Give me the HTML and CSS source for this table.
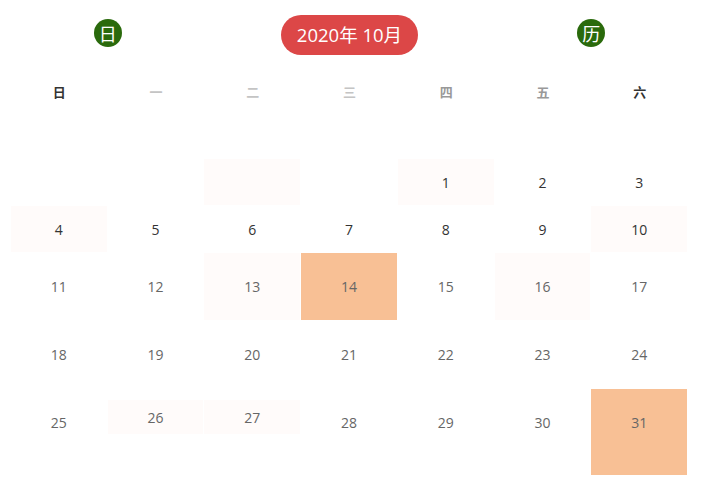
FILE: index.html
```html
<!DOCTYPE html>
<html lang="zh">
<head>
<meta charset="utf-8">
<title>日历</title>
<link rel="stylesheet" href="styles.css">
</head>
<body>
<div class="cal">
  <div class="top">
    <div class="badge-slot left"><span class="circle">日</span></div>
    <div class="title-slot"><span class="title">2020年 10月</span></div>
    <div class="badge-slot right"><span class="circle">历</span></div>
  </div>
  <div class="weekdays">
    <span class="wd dark">日</span>
    <span class="wd light">一</span>
    <span class="wd light">二</span>
    <span class="wd light">三</span>
    <span class="wd mid">四</span>
    <span class="wd mid">五</span>
    <span class="wd dark">六</span>
  </div>
  <div class="days">
    <div class="d"></div>
    <div class="d"></div>
    <div class="d soft"></div>
    <div class="d"></div>
    <div class="d soft dk">1</div>
    <div class="d dk">2</div>
    <div class="d dk">3</div>

    <div class="d soft dk">4</div>
    <div class="d dk">5</div>
    <div class="d dk">6</div>
    <div class="d dk">7</div>
    <div class="d dk">8</div>
    <div class="d dk">9</div>
    <div class="d soft dk">10</div>

    <div class="d">11</div>
    <div class="d">12</div>
    <div class="d soft">13</div>
    <div class="d hot">14</div>
    <div class="d">15</div>
    <div class="d soft">16</div>
    <div class="d">17</div>

    <div class="d">18</div>
    <div class="d">19</div>
    <div class="d">20</div>
    <div class="d">21</div>
    <div class="d">22</div>
    <div class="d">23</div>
    <div class="d">24</div>

    <div class="d last">25</div>
    <div class="d soft small">26</div>
    <div class="d soft small">27</div>
    <div class="d last">28</div>
    <div class="d last">29</div>
    <div class="d last">30</div>
    <div class="d hot last">31</div>
  </div>
</div>
</body>
</html>
```

FILE: styles.css
```css
* { box-sizing: border-box; }
body {
  margin: 0;
  background: #fff;
  font-family: "Open Sans", "Noto Sans CJK SC", sans-serif;
}
.cal {
  width: 677px;
  margin-left: 11px;
}
.top {
  display: grid;
  grid-template-columns: repeat(7, 1fr);
  height: 70px;
  padding-top: 15px;
}
.badge-slot {
  grid-column: span 2;
  display: flex;
  justify-content: center;
  align-items: flex-start;
  padding-top: 4px;
}
.title-slot {
  grid-column: span 3;
  display: flex;
  justify-content: center;
  align-items: flex-start;
}
.circle {
  width: 28px;
  height: 28px;
  border-radius: 50%;
  background: #2a6a0c;
  color: #fff;
  font-family: "Noto Sans CJK SC", sans-serif;
  font-size: 18px;
  line-height: 28px;
  text-align: center;
}
.title {
  display: inline-block;
  height: 40px;
  line-height: 40px;
  width: 137px;
  text-align: center;
  border-radius: 20px;
  background: #dc4747;
  color: #fff;
  font-size: 18.5px;
  white-space: nowrap;
}
.weekdays {
  display: grid;
  grid-template-columns: repeat(7, 1fr);
  height: 42px;
  align-items: center;
  text-align: center;
  font-family: "Noto Sans CJK SC", sans-serif;
  font-size: 13px;
  font-weight: bold;
}
.wd.dark { color: #333; }
.wd.mid { color: #999; }
.wd.light { color: #c4c4c4; }
.days {
  display: grid;
  grid-template-columns: repeat(7, 1fr);
  grid-template-rows: 47px 47px 68px 68px 87px;
  margin-top: 47px;
}
.d {
  display: flex;
  align-items: center;
  justify-content: center;
  font-size: 14px;
  color: #666;
  margin: 0 1px 1px 0;
}
.d.dk { color: #333; }
.d.soft { background: #fffbfa; }
.d.hot { background: #f8c095; }
.d.last {
  align-items: flex-start;
  padding-top: 24px;
}
.d.small {
  align-self: start;
  height: 34px;
  margin-top: 11px;
}
```
